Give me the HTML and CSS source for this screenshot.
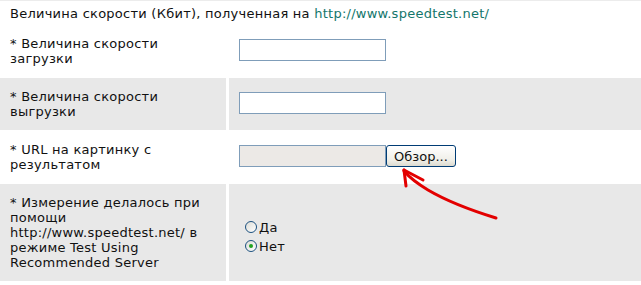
FILE: index.html
```html
<!DOCTYPE html>
<html lang="ru">

<head>
    <meta charset="UTF-8">
    <title>Скорость</title>
    <link rel="stylesheet" href="styles.css">
</head>

<body>
    <div class="speed-form">
        <div class="intro">
            Величина скорости (Кбит), полученная на <a href="#" class="link">http://www.speedtest.net/</a>
        </div>

        <div class="form-row">
            <div class="label-cell">* Величина скорости загрузки</div>
            <div class="field-cell"><input type="text" class="text-input"></div>
        </div>

        <div class="form-row alt">
            <div class="label-cell">* Величина скорости выгрузки</div>
            <div class="field-cell"><input type="text" class="text-input"></div>
        </div>

        <div class="form-row">
            <div class="label-cell">* URL на картинку с результатом</div>
            <div class="field-cell">
                <span class="file-box"></span><button type="button" class="browse-btn">Обзор...</button>
            </div>
        </div>

        <div class="form-row alt">
            <div class="label-cell">* Измерение делалось при помощи http://www.speedtest.net/ в режиме Test Using Recommended Server</div>
            <div class="field-cell">
                <div class="radio-group">
                    <label class="radio"><span class="radio-mark"></span>Да</label>
                    <label class="radio"><span class="radio-mark checked"></span>Нет</label>
                </div>
            </div>
        </div>

        <!-- красная стрелка поверх формы -->
        <svg class="arrow" width="641" height="285" viewBox="0 0 641 285">
            <path d="M496 218 C470 210 445 200 428 190 C418 184 410 178 404 171" fill="none" stroke="#e30000" stroke-width="3" stroke-linecap="round" />
            <path d="M404 170 L406 186" fill="none" stroke="#e30000" stroke-width="3" stroke-linecap="round" />
            <path d="M404 170 L423 180" fill="none" stroke="#e30000" stroke-width="3" stroke-linecap="round" />
        </svg>
    </div>
</body>

</html>
```

FILE: styles.css
```css
* {
    margin: 0;
    padding: 0;
    box-sizing: border-box;
}

body {
    background-color: #fff;
    color: #111;
    font-family: 'DejaVu Sans', Verdana, sans-serif;
    font-size: 13px;
    line-height: 15px;
    letter-spacing: 0.25px;
    border-top: 1px solid #ececec;
}

.speed-form {
    position: relative;
    width: 641px;
}

.intro {
    padding: 5px 10px 3px;
    height: 24px;
}

.link {
    color: #13766b;
    text-decoration: none;
}

.form-row {
    display: grid;
    grid-template-columns: 226px 1fr;
    column-gap: 3px;
    margin-bottom: 1px;
}

.label-cell {
    padding: 11px 10px;
    min-height: 52px;
}

.field-cell {
    display: flex;
    align-items: center;
    padding: 0 10px 2px;
}

.form-row.alt .label-cell,
.form-row.alt .field-cell {
    background-color: #e8e8e8;
}

.text-input {
    width: 147px;
    height: 22px;
    border: 1px solid #7f9db9;
    background-color: #fff;
}

.file-box {
    display: inline-block;
    width: 147px;
    height: 22px;
    border: 1px solid #7f9db9;
    background-color: #ece9e6;
}

.browse-btn {
    width: 70px;
    height: 22px;
    border: 1px solid #003c74;
    border-radius: 3px;
    background: linear-gradient(#fff, #f0efe8 70%, #dcdad0);
    font-family: 'DejaVu Sans', Verdana, sans-serif;
    font-size: 13px;
    color: #111;
}

.radio-group {
    display: flex;
    flex-direction: column;
    gap: 4px;
    padding: 10px 0 0 6px;
}

.radio {
    display: flex;
    align-items: center;
    gap: 2px;
    height: 15px;
}

.radio-mark {
    width: 12px;
    height: 12px;
    border: 1px solid #1c5180;
    border-radius: 50%;
    background: linear-gradient(135deg, #dcdcd6, #fff);
    position: relative;
}

.radio-mark.checked::after {
    content: "";
    position: absolute;
    left: 3px;
    top: 3px;
    width: 4px;
    height: 4px;
    border-radius: 50%;
    background-color: #21a121;
}

.arrow {
    position: absolute;
    left: 0;
    top: -1px;
    pointer-events: none;
}
```
